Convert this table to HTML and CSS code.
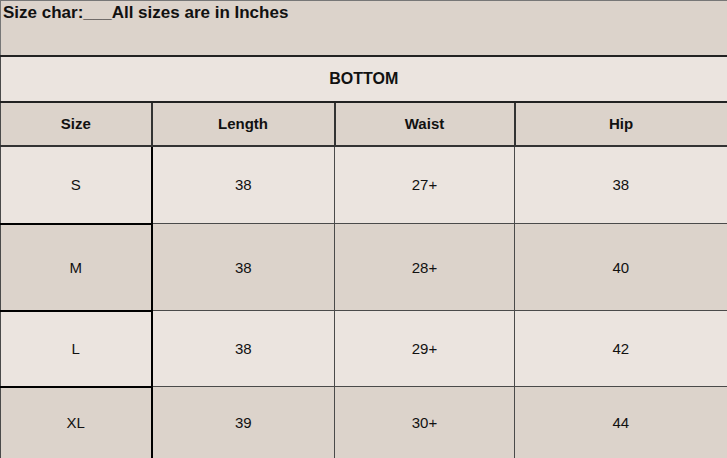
FILE: index.html
```html
<!DOCTYPE html>
<html>
<head>
<meta charset="utf-8">
<link rel="stylesheet" href="styles.css">
</head>
<body>
<table class="chart">
  <colgroup>
    <col class="c1"><col class="c2"><col class="c3"><col class="c4">
  </colgroup>
  <tr class="r-title"><td colspan="4" class="title">Size char:___All sizes are in Inches</td></tr>
  <tr class="r-section"><td colspan="4" class="section">BOTTOM</td></tr>
  <tr class="r-head">
    <th class="first">Size</th><th>Length</th><th>Waist</th><th>Hip</th>
  </tr>
  <tr class="r-s light">
    <td class="first">S</td><td>38</td><td>27+</td><td>38</td>
  </tr>
  <tr class="r-m dark">
    <td class="first">M</td><td>38</td><td>28+</td><td>40</td>
  </tr>
  <tr class="r-l light">
    <td class="first">L</td><td>38</td><td>29+</td><td>42</td>
  </tr>
  <tr class="r-xl dark">
    <td class="first">XL</td><td>39</td><td>30+</td><td>44</td>
  </tr>
</table>
</body>
</html>
```

FILE: styles.css
```css
html, body {
  margin: 0;
  padding: 0;
  background: #dcd3cb;
}
.chart {
  width: 727px;
  border-collapse: collapse;
  table-layout: fixed;
  font-family: "Liberation Sans", Arial, sans-serif;
  color: #111;
}
.c1 { width: 151px; }
.c2 { width: 183px; }
.c3 { width: 180px; }
.c4 { width: 213px; }

.chart td, .chart th {
  padding: 0;
  text-align: center;
  vertical-align: middle;
  border: 1px solid #4a4a4a;
  font-size: 15px;
  font-weight: normal;
}

.title {
  background: #dcd3cb;
  text-align: left !important;
  vertical-align: top !important;
  font-weight: bold !important;
  font-size: 17px !important;
  padding: 2px 0 0 2px !important;
  border-top: 1px solid #777 !important;
  border-left: 1px solid #777 !important;
  border-right: 2px solid #444 !important;
  border-bottom: 2px solid #222 !important;
}
.r-title { height: 55px; }

.section {
  background: #ebe4df;
  font-weight: bold !important;
  font-size: 16px !important;
  border-bottom: 2px solid #222 !important;
  border-right: 2px solid #444 !important;
}
.r-section { height: 46px; }

.r-head th {
  background: #dcd3cb;
  font-weight: bold;
  font-size: 15px;
  border-bottom: 2px solid #333;
  border-right: 2px solid #333;
}
.r-head { height: 44px; }

.light td { background: #ebe4df; }
.dark td { background: #dcd3cb; }

.chart td.first {
  border-right: 2px solid #000;
  border-bottom: 2px solid #000;
}
.r-xl td.first { border-bottom: 1px solid #888; }
.r-xl td { border-bottom: 1px solid #888; }
.chart tr td:last-child { border-right: 2px solid #555; }

.r-s { height: 78px; }
.r-m { height: 87px; }
.r-l { height: 76px; }
.r-xl { height: 72px; }
```
